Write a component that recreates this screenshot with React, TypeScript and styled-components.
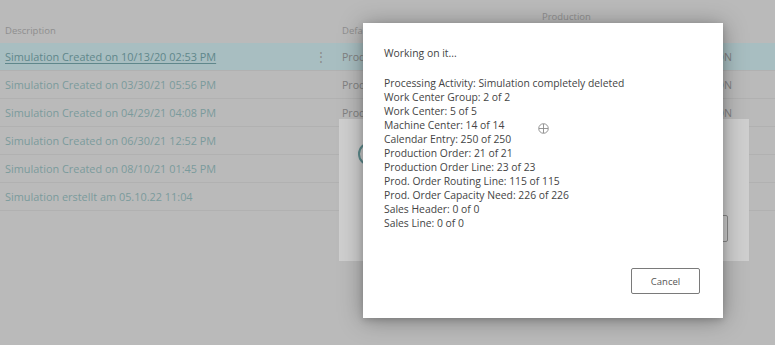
import React from "react";
import styled, { createGlobalStyle } from "styled-components";

const GlobalStyle = createGlobalStyle`
  html, body { margin: 0; padding: 0; }
  body {
    background: #bababa;
    font-family: "Open Sans", "Noto Sans", sans-serif;
  }
`;

const Page = styled.div`
  position: relative;
  width: 775px;
  height: 345px;
  overflow: hidden;
  background: #bababa;
`;

const Table = styled.div`
  display: flex;
  flex-direction: column;
`;

const Grid = `
  display: grid;
  grid-template-columns: 305px 32px 200px 190px 1fr;
  padding-left: 5px;
`;

const HeaderRow = styled.div`
  ${Grid};
  height: 43px;
  align-items: end;
`;

const HeaderCell = styled.div`
  font-size: 9.5px;
  line-height: 14px;
  color: #8e8e8e;
  padding-bottom: 5px;
  white-space: nowrap;
`;

const Row = styled.div<{ $active?: boolean }>`
  ${Grid};
  height: 27px;
  align-items: center;
  border-bottom: 1px solid #b1b1b1;
  background: ${(p) => (p.$active ? "#a8bec1" : "transparent")};
`;

const LinkCell = styled.div<{ $active?: boolean }>`
  font-size: 10.9px;
  color: ${(p) => (p.$active ? "#5f878b" : "#7a9a9c")};
  text-decoration: ${(p) => (p.$active ? "underline" : "none")};
  text-underline-offset: 2px;
  white-space: nowrap;
`;

const Kebab = styled.div`
  font-size: 12px;
  color: #8a8a8a;
  text-align: center;
  padding-right: 10px;
`;

const TextCell = styled.div<{ $right?: boolean }>`
  font-size: 10.6px;
  color: #808080;
  white-space: nowrap;
  text-align: ${(p) => (p.$right ? "right" : "left")};
`;

const BackDialog = styled.div`
  position: absolute;
  left: 339px;
  top: 119px;
  width: 410px;
  height: 142px;
  background: #cfcfcf;
  box-sizing: border-box;
  padding: 0 21px 19px 0;
  display: flex;
  flex-direction: column;
  justify-content: flex-end;
  align-items: flex-end;
`;

const Spinner = styled.svg`
  position: absolute;
  left: 18px;
  top: 22px;
`;

const BackButton = styled.div`
  width: 70px;
  height: 25px;
  border: 1px solid #8a8a8a;
  border-radius: 2px;
`;

const Dialog = styled.div`
  position: absolute;
  left: 363px;
  top: 23px;
  width: 360px;
  height: 295px;
  background: #ffffff;
  box-shadow: 0 2px 22px rgba(0, 0, 0, 0.34), 0 2px 6px rgba(0, 0, 0, 0.15);
  box-sizing: border-box;
  padding: 23px 23px 24px 21px;
  display: flex;
  flex-direction: column;
`;

const Title = styled.div`
  font-size: 10.4px;
  line-height: 14px;
  color: #444;
  margin-bottom: 16px;
`;

const Lines = styled.div`
  display: flex;
  flex-direction: column;
  flex: 1;
`;

const Line = styled.div`
  font-size: 10.35px;
  line-height: 14px;
  height: 14px;
  color: #444;
  white-space: nowrap;
`;

const Footer = styled.div`
  display: flex;
  justify-content: flex-end;
`;

const CancelButton = styled.button`
  width: 69px;
  height: 26px;
  background: #fff;
  border: 1px solid #7a7a7a;
  border-radius: 2px;
  font-family: "Open Sans", "Noto Sans", sans-serif;
  font-size: 9.5px;
  color: #555;
  padding: 0;
`;

const Cursor = styled.svg`
  position: absolute;
  left: 538px;
  top: 123px;
`;

const rows = [
  "Simulation Created on 10/13/20 02:53 PM",
  "Simulation Created on 03/30/21 05:56 PM",
  "Simulation Created on 04/29/21 04:08 PM",
  "Simulation Created on 06/30/21 12:52 PM",
  "Simulation Created on 08/10/21 01:45 PM",
  "Simulation erstellt am 05.10.22 11:04",
];

const lines = [
  "Processing Activity: Simulation completely deleted",
  "Work Center Group: 2 of 2",
  "Work Center: 5 of 5",
  "Machine Center: 14 of 14",
  "Calendar Entry: 250 of 250",
  "Production Order: 21 of 21",
  "Production Order Line: 23 of 23",
  "Prod. Order Routing Line: 115 of 115",
  "Prod. Order Capacity Need: 226 of 226",
  "Sales Header: 0 of 0",
  "Sales Line: 0 of 0",
];

export default function App() {
  return (
    <>
      <GlobalStyle />
      <Page>
        <Table>
          <HeaderRow>
            <HeaderCell>Description</HeaderCell>
            <HeaderCell />
            <HeaderCell>Default</HeaderCell>
            <HeaderCell>
              Production
              <br />
              Template
            </HeaderCell>
          </HeaderRow>
          {rows.map((r, i) => (
            <Row key={r} $active={i === 0}>
              <LinkCell $active={i === 0}>{r}</LinkCell>
              <Kebab>{i === 0 ? "⋮" : ""}</Kebab>
              <TextCell>Production</TextCell>
              <TextCell $right>{i < 3 ? "SIMULATION" : ""}</TextCell>
            </Row>
          ))}
        </Table>

        <BackDialog>
          <Spinner width="26" height="26" viewBox="0 0 26 26">
            <circle cx="13" cy="13" r="11" fill="none" stroke="#5e8d8f" strokeWidth="2" />
          </Spinner>
          <BackButton />
        </BackDialog>

        <Dialog>
          <Title>Working on it...</Title>
          <Lines>
            {lines.map((l) => (
              <Line key={l}>{l}</Line>
            ))}
          </Lines>
          <Footer>
            <CancelButton>Cancel</CancelButton>
          </Footer>
        </Dialog>

        <Cursor width="11" height="11" viewBox="0 0 11 11">
          <circle cx="5.5" cy="5.5" r="4.8" fill="none" stroke="#8a8a8a" strokeWidth="0.9" />
          <line x1="5.5" y1="1" x2="5.5" y2="10" stroke="#8a8a8a" strokeWidth="0.9" />
          <line x1="1" y1="5.5" x2="10" y2="5.5" stroke="#8a8a8a" strokeWidth="0.9" />
        </Cursor>
      </Page>
    </>
  );
}
